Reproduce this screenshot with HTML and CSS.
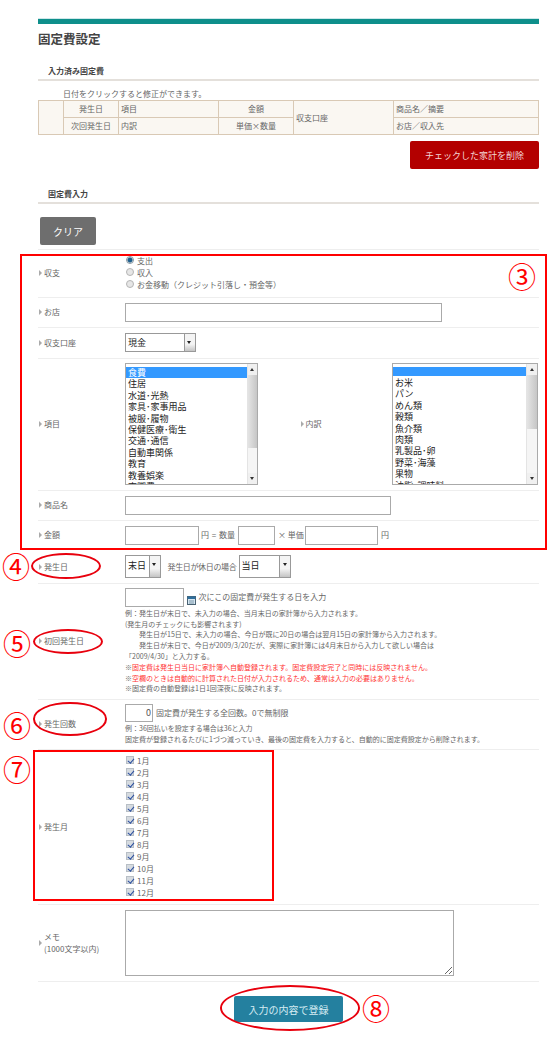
FILE: index.html
```html
<!DOCTYPE html>
<html lang="ja">
<head>
    <meta charset="UTF-8">
    <meta name="viewport" content="width=device-width, initial-scale=1.0">
    <title>固定費設定</title>
    <link rel="stylesheet" href="styles.css">
</head>
<body>
    <div class="page">
        <div class="top-bar"></div>
        <h1>固定費設定</h1>

        <h2 class="section-title first">入力済み固定費</h2>
        <p class="intro">日付をクリックすると修正ができます。</p>
        <table class="fixed-table">
            <tr>
                <td rowspan="2" class="c-check"></td>
                <td class="c-date center">発生日</td>
                <td class="c-item">項目</td>
                <td class="c-money center">金額</td>
                <td rowspan="2" class="c-account">収支口座</td>
                <td class="c-name">商品名／摘要</td>
            </tr>
            <tr>
                <td class="center">次回発生日</td>
                <td>内訳</td>
                <td class="center">単価×数量</td>
                <td>お店／収入先</td>
            </tr>
        </table>
        <div class="delete-line">
            <button class="btn btn-delete">チェックした家計を削除</button>
        </div>

        <h2 class="section-title second">固定費入力</h2>
        <div class="clear-line">
            <button class="btn btn-clear">クリア</button>
        </div>

        <div class="row h-kind">
            <div class="label">収支</div>
            <div class="field">
                <label class="choice"><input type="radio" name="kind" checked>支出</label>
                <label class="choice"><input type="radio" name="kind">収入</label>
                <label class="choice"><input type="radio" name="kind">お金移動（クレジット引落し・預金等）</label>
            </div>
        </div>
        <div class="row h-30">
            <div class="label">お店</div>
            <div class="field"><input type="text" class="text w-shop"></div>
        </div>
        <div class="row h-31">
            <div class="label">収支口座</div>
            <div class="field">
                <div class="select w-account"><span class="select-value">現金</span><span class="select-arrow"></span></div>
            </div>
        </div>
        <div class="row h-lists">
            <div class="label">項目</div>
            <div class="field field-lists">
                <div class="listbox w-list1">
                    <div class="list-items">
                        <div class="list-item selected">食費</div>
                        <div class="list-item">住居</div>
                        <div class="list-item">水道･光熱</div>
                        <div class="list-item">家具･家事用品</div>
                        <div class="list-item">被服･履物</div>
                        <div class="list-item">保健医療･衛生</div>
                        <div class="list-item">交通･通信</div>
                        <div class="list-item">自動車関係</div>
                        <div class="list-item">教育</div>
                        <div class="list-item">教養娯楽</div>
                        <div class="list-item">交際費</div>
                    </div>
                    <div class="scrollbar">
                        <span class="scroll-btn up"></span>
                        <span class="scroll-track"><span class="scroll-thumb thumb1"></span></span>
                        <span class="scroll-btn down"></span>
                    </div>
                </div>
                <div class="label label-sub">内訳</div>
                <div class="listbox w-list2">
                    <div class="list-items">
                        <div class="list-item selected blank"></div>
                        <div class="list-item">お米</div>
                        <div class="list-item">パン</div>
                        <div class="list-item">めん類</div>
                        <div class="list-item">穀類</div>
                        <div class="list-item">魚介類</div>
                        <div class="list-item">肉類</div>
                        <div class="list-item">乳製品･卵</div>
                        <div class="list-item">野菜･海藻</div>
                        <div class="list-item">果物</div>
                        <div class="list-item">油脂･調味料</div>
                    </div>
                    <div class="scrollbar">
                        <span class="scroll-btn up"></span>
                        <span class="scroll-track"><span class="scroll-thumb thumb2"></span></span>
                        <span class="scroll-btn down"></span>
                    </div>
                </div>
            </div>
        </div>
        <div class="row h-30">
            <div class="label">商品名</div>
            <div class="field"><input type="text" class="text w-name"></div>
        </div>
        <div class="row h-30 row-noline">
            <div class="label">金額</div>
            <div class="field field-inline">
                <input type="text" class="text w-price">
                <span class="unit u1">円 = 数量</span>
                <input type="text" class="text w-qty">
                <span class="unit u2">× 単価</span>
                <input type="text" class="text w-price">
                <span class="unit u3">円</span>
            </div>
        </div>
        <div class="row h-day">
            <div class="label">発生日</div>
            <div class="field field-inline">
                <div class="select tall w-day"><span class="select-value">末日</span><span class="select-arrow"></span></div>
                <span class="unit u4">発生日が休日の場合</span>
                <div class="select tall w-holiday"><span class="select-value">当日</span><span class="select-arrow"></span></div>
            </div>
        </div>
        <div class="row h-first">
            <div class="label">初回発生日</div>
            <div class="field">
                <div class="field-inline">
                    <input type="text" class="text w-first">
                    <svg class="cal-icon" width="9" height="9" viewBox="0 0 9 9"><rect x="0.5" y="0.5" width="8" height="8" fill="#d5e6f2" stroke="#4a6272"/><rect x="0.5" y="0.5" width="8" height="2.5" fill="#2f6f9c"/><path d="M2 5h5M2 7h5" stroke="#7d97a8"/></svg>
                    <span class="unit u5">次にこの固定費が発生する日を入力</span>
                </div>
                <div class="notes">
                    例：発生日が末日で、未入力の場合、当月末日の家計簿から入力されます。<br>
                    (発生月のチェックにも影響されます)<br>
                    　　発生日が15日で、未入力の場合、今日が既に20日の場合は翌月15日の家計簿から入力されます。<br>
                    　　発生日が末日で、今日が2009/3/20だが、実際に家計簿には4月末日から入力して欲しい場合は<br>
                    「2009/4/30」と入力する。<br>
                    ※<span class="alert">固定費は発生日当日に家計簿へ自動登録されます。固定費設定完了と同時には反映されません。</span><br>
                    ※<span class="alert">空欄のときは自動的に計算された日付が入力されるため、通常は入力の必要はありません。</span><br>
                    ※固定費の自動登録は1日1回深夜に反映されます。
                </div>
            </div>
        </div>
        <div class="row h-count">
            <div class="label">発生回数</div>
            <div class="field">
                <div class="field-inline">
                    <input type="text" class="text w-count" value="0">
                    <span class="unit u6">固定費が発生する全回数。0で無制限</span>
                </div>
                <div class="notes">
                    例：36回払いを設定する場合は36と入力<br>
                    固定費が登録されるたびに1づつ減っていき、最後の固定費を入力すると、自動的に固定費設定から削除されます。
                </div>
            </div>
        </div>
        <div class="row h-months">
            <div class="label">発生月</div>
            <div class="field">
                <label class="choice"><input type="checkbox" checked>1月</label>
                <label class="choice"><input type="checkbox" checked>2月</label>
                <label class="choice"><input type="checkbox" checked>3月</label>
                <label class="choice"><input type="checkbox" checked>4月</label>
                <label class="choice"><input type="checkbox" checked>5月</label>
                <label class="choice"><input type="checkbox" checked>6月</label>
                <label class="choice"><input type="checkbox" checked>7月</label>
                <label class="choice"><input type="checkbox" checked>8月</label>
                <label class="choice"><input type="checkbox" checked>9月</label>
                <label class="choice"><input type="checkbox" checked>10月</label>
                <label class="choice"><input type="checkbox" checked>11月</label>
                <label class="choice"><input type="checkbox" checked>12月</label>
            </div>
        </div>
        <div class="row h-memo">
            <div class="label">メモ<br>(1000文字以内)</div>
            <div class="field"><textarea class="memo"></textarea></div>
        </div>
        <div class="submit-line">
            <button class="btn btn-submit">入力の内容で登録</button>
        </div>
    </div>

    <!-- 赤い注釈 -->
    <div class="note-box box-3"></div>
    <div class="note-box box-7"></div>
    <div class="note-oval oval-4"></div>
    <div class="note-oval oval-5"></div>
    <div class="note-oval oval-6"></div>
    <div class="note-oval oval-8"></div>
    <div class="note-num num-3">③</div>
    <div class="note-num num-4">④</div>
    <div class="note-num num-5">⑤</div>
    <div class="note-num num-6">⑥</div>
    <div class="note-num num-7">⑦</div>
    <div class="note-num num-8">⑧</div>
</body>
</html>
```

FILE: styles.css
```css
* {
    box-sizing: border-box;
}
body {
    margin: 0;
    background: #fff;
    font-family: "Noto Sans CJK JP", "Noto Sans", sans-serif;
    font-size: 8px;
    line-height: 12px;
    color: #666;
}
.page {
    width: 501px;
    height: 1048px;
    margin-left: 38px;
    padding-top: 18px;
    overflow: hidden;
}
.top-bar {
    height: 6px;
    background: #0e8f8b;
    border-top: 1px solid #cfe8ea;
}
h1 {
    margin: 6px 0 0;
    font-size: 12.5px;
    line-height: 18px;
    color: #444;
}
.section-title {
    margin: 0;
    height: 16px;
    padding-left: 10px;
    font-size: 8px;
    line-height: 12px;
    color: #444;
    border-bottom: 2px solid #e4e0db;
}
.section-title.first {
    margin-top: 17px;
}
.section-title.second {
    margin-top: 19px;
}
.intro {
    margin: 7px 0 0 25px;
    line-height: 12px;
}

/* 一覧テーブル */
.fixed-table {
    width: 501px;
    height: 35px;
    table-layout: fixed;
    border-collapse: collapse;
    background: #faf7f2;
}
.fixed-table td {
    height: 17px;
    padding: 0 2px;
    border: 1px solid #d9c9b5;
    line-height: 12px;
    white-space: nowrap;
}
.c-check { width: 25px; }
.c-date { width: 55px; }
.c-item { width: 100px; }
.c-money { width: 75px; }
.c-account { width: 100px; }
.center { text-align: center; }

/* ボタン */
.btn {
    border: none;
    border-radius: 2px;
    font-family: inherit;
    color: #fff;
    cursor: pointer;
}
.delete-line {
    display: flex;
    justify-content: flex-end;
    margin-top: 6px;
}
.btn-delete {
    width: 129px;
    height: 28px;
    background: #b30000;
    font-size: 9px;
    color: #f3d6d6;
}
.clear-line {
    height: 46px;
    padding: 13px 0 0 2px;
    border-bottom: 1px solid #eee;
}
.btn-clear {
    display: block;
    width: 56px;
    height: 28px;
    background: #6e6e6e;
    font-size: 10px;
}
.submit-line {
    display: flex;
    justify-content: center;
    padding-top: 14px;
}
.btn-submit {
    width: 109px;
    height: 26px;
    background: #24809f;
    font-size: 10px;
    color: #d5ecf3;
}

/* 入力行 */
.row {
    display: flex;
    align-items: center;
    border-bottom: 1px solid #eee;
}
.row-noline {
    border-bottom-color: transparent;
}
.h-kind { height: 47.5px; }
.h-30 { height: 30px; }
.h-31 { height: 31px; }
.h-lists { height: 132px; }
.h-day { height: 33px; }
.h-first { height: 116px; }
.h-count { height: 50.5px; }
.h-months { height: 155px; }
.h-memo { height: 77px; }
.label {
    position: relative;
    flex: none;
    width: 87px;
    padding-left: 6px;
    line-height: 12px;
}
.label::before {
    content: "";
    position: absolute;
    left: 1px;
    top: 50%;
    margin-top: -3px;
    border-left: 3px solid #aaa;
    border-top: 3px solid transparent;
    border-bottom: 3px solid transparent;
}
.field {
    flex: 1;
    min-width: 0;
}
.field-inline {
    display: flex;
    align-items: center;
}
.field-lists {
    display: flex;
    align-items: center;
}
.label-sub {
    width: 92.5px;
    margin-left: 41.5px;
}
.choice {
    display: flex;
    align-items: center;
    height: 12px;
    white-space: nowrap;
}
.choice input {
    appearance: none;
    flex: none;
    width: 8px;
    height: 8px;
    margin: -3px 3px 0 1px;
    background: #e6e6e6;
    border: 1px solid #b5b5b5;
}
.choice input[type="radio"] {
    border-radius: 50%;
}
.choice input[type="radio"]:checked {
    background: radial-gradient(circle, #1f5f8c 0 2px, #dfe6ea 3px);
    border-color: #8c9aa3;
}
.choice input[type="checkbox"] {
    background: #d6dbe0;
    border-color: #b8bfc6;
    position: relative;
}
.choice input[type="checkbox"]:checked::after {
    content: "";
    position: absolute;
    left: 2px;
    top: 0;
    width: 2.5px;
    height: 5px;
    border-right: 1.2px solid #2b4fa0;
    border-bottom: 1.2px solid #2b4fa0;
    transform: rotate(40deg);
}
.text {
    display: block;
    flex: none;
    height: 19px;
    padding: 0 1px;
    border: 1px solid #aaa;
    background: #fff;
    font-family: inherit;
    font-size: 9px;
    color: #555;
}
.w-shop { width: 317px; }
.w-name { width: 266px; }
.w-price { width: 73.5px; }
.w-qty { width: 37.5px; }
.w-first { width: 58.5px; }
.w-count {
    width: 28px;
    height: 18.5px;
    text-align: right;
}
.unit {
    flex: none;
    white-space: nowrap;
    line-height: 12px;
}
.u1 { margin: 0 2.5px 0 2.5px; width: 34px; word-spacing: 1px; }
.u2 { margin: 0 2.5px 0 3px; width: 24px; word-spacing: 0; }
.u3 { margin-left: 3px; }
.u4 { margin: 0 2px 0 7px; width: 69px; letter-spacing: -0.35px; }
.u5 { margin-left: 3px; }
.u6 { margin-left: 3px; }
.cal-icon {
    margin: 6px 0 0 3px;
    flex: none;
}

/* セレクト */
.select {
    display: flex;
    flex: none;
    height: 19.5px;
    border: 1px solid #999;
    background: #fff;
}
.select.tall {
    height: 23px;
}
.select-value {
    flex: 1;
    padding-left: 2px;
    font-size: 9px;
    line-height: 18px;
    color: #222;
}
.select.tall .select-value {
    line-height: 20px;
}
.select-arrow {
    position: relative;
    flex: none;
    width: 11px;
    background: linear-gradient(#f4f4f4 60%, #c4c4c4);
    border-left: 1px solid #999;
}
.select-arrow::after {
    content: "";
    position: absolute;
    left: 2.5px;
    top: 7px;
    border-top: 3px solid #222;
    border-left: 2.5px solid transparent;
    border-right: 2.5px solid transparent;
}
.w-account { width: 70.5px; }
.w-day { width: 35.5px; }
.w-holiday { width: 52.5px; }

/* リストボックス */
.listbox {
    display: flex;
    flex: none;
    height: 122px;
    border: 1px solid #aaa;
    background: #fff;
    overflow: hidden;
}
.w-list1 { width: 133px; }
.w-list2 { width: 145.5px; }
.list-items {
    flex: 1;
    min-width: 0;
    padding-top: 3px;
    font-size: 9px;
    color: #222;
    overflow: hidden;
}
.list-item {
    height: 11.4px;
    padding-left: 2px;
    line-height: 11.4px;
    white-space: nowrap;
}
.list-item.selected {
    background: #3399ff;
    color: #fff;
}
.list-item.blank {
    height: 9px;
    margin-bottom: 1px;
}
.scrollbar {
    display: flex;
    flex-direction: column;
    flex: none;
    width: 10.5px;
    background: #f5f5f5;
    border-left: 1px solid #e4e4e4;
}
.scroll-btn {
    position: relative;
    flex: none;
    height: 11px;
    background: #f0f0f0;
}
.scroll-btn::after {
    content: "";
    position: absolute;
    left: 2.5px;
    border-left: 2.5px solid transparent;
    border-right: 2.5px solid transparent;
}
.scroll-btn.up::after {
    top: 4px;
    border-bottom: 3px solid #333;
}
.scroll-btn.down::after {
    top: 4px;
    border-top: 3px solid #333;
}
.scroll-track {
    flex: 1;
}
.scroll-thumb {
    display: block;
    background: linear-gradient(90deg, #e4e4e4, #c6c6c6);
}
.thumb1 { height: 73px; }
.thumb2 { height: 54px; }

/* 説明文 */
.notes {
    margin-top: 1px;
    font-size: 7px;
    line-height: 10.8px;
    white-space: nowrap;
}
.alert {
    color: #f33;
}
.memo {
    display: block;
    width: 329px;
    height: 66px;
    border: 1px solid #aaa;
    background: #fff;
}

/* 注釈 */
.note-box {
    position: absolute;
    border: 2px solid #f00;
}
.box-3 {
    left: 20px;
    top: 254px;
    width: 527px;
    height: 295.5px;
}
.box-7 {
    left: 32.5px;
    top: 750px;
    width: 241.5px;
    height: 151px;
}
.note-oval {
    position: absolute;
    border: 2px solid #e8000d;
    border-radius: 50%;
}
.oval-4 { left: 31px; top: 553px; width: 70px; height: 26px; }
.oval-5 { left: 33px; top: 628.5px; width: 70px; height: 25px; }
.oval-6 { left: 33px; top: 702px; width: 73.5px; height: 33.5px; }
.oval-8 { left: 220px; top: 985px; width: 140px; height: 45.5px; }
.note-num {
    position: absolute;
    width: 32px;
    height: 32px;
    font-size: 28px;
    line-height: 32px;
    text-align: center;
    color: #f00;
}
.num-3 { left: 506px; top: 260px; }
.num-4 { left: 0; top: 550px; }
.num-5 { left: 1px; top: 627px; }
.num-6 { left: 1px; top: 709px; }
.num-7 { left: 1px; top: 753px; }
.num-8 { left: 360px; top: 992px; }
```
